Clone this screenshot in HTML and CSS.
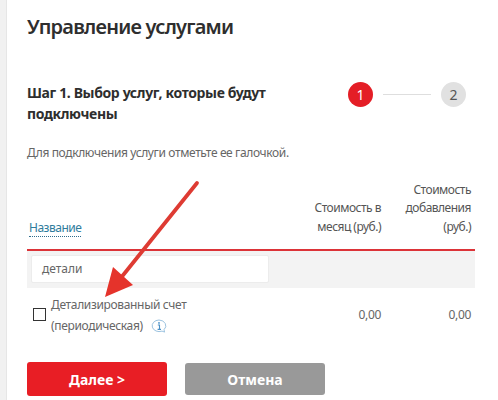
FILE: index.html
```
<!DOCTYPE html>
<html lang="ru">
<head>
<meta charset="utf-8">
<title>Управление услугами</title>
<link rel="stylesheet" href="styles.css">
</head>
<body>
<main class="panel">
  <h1 class="title">Управление услугами</h1>
  <section class="step-head">
    <h2 class="step-title">Шаг 1. Выбор услуг, которые будут подключены</h2>
    <div class="stepper">
      <span class="dot dot-active">1</span>
      <span class="connector"></span>
      <span class="dot">2</span>
    </div>
  </section>
  <p class="hint">Для подключения услуги отметьте ее галочкой.</p>
  <div class="table">
    <div class="thead">
      <a class="name-head">Название</a>
      <div class="col-a">Стоимость в месяц (руб.)</div>
      <div class="col-b">Стоимость добавления (руб.)</div>
    </div>
    <div class="filter"><div class="filter-input">детали</div></div>
    <div class="row">
      <span class="check"></span>
      <div class="service">Детализированный счет<br>(периодическая)
        <svg class="info" viewBox="0 0 16 14" width="16" height="14"><path d="M8 1a7 5.8 0 1 0 3 11.1l2.6 1-.6-2.4A7 5.8 0 0 0 8 1z" fill="none" stroke="#9cc3e0" stroke-width="1"/><circle cx="8" cy="3.9" r=".9" fill="#4a90c6"/><path d="M6.8 6h1.7v4.2M6.6 10.4h3.4" fill="none" stroke="#4a90c6" stroke-width="1.1"/></svg>
      </div>
      <div class="val-a">0,00</div>
      <div class="val-b">0,00</div>
    </div>
  </div>
  <div class="actions">
    <button class="btn btn-next">Далее &gt;</button>
    <button class="btn btn-cancel">Отмена</button>
  </div>
</main>
<svg class="arrow" viewBox="0 0 498 400" width="498" height="400"><line x1="197" y1="183" x2="120" y2="279" stroke="#de3b33" stroke-width="3.8" stroke-linecap="round"/><polygon points="113,267 133,285 105,297" fill="#e5332b"/></svg>
</body>
</html>
```
FILE: styles.css
```
* { box-sizing: border-box; }
html, body { margin: 0; height: 400px; overflow: hidden; }
body { background: #fff; font-family: "Noto Sans", "Open Sans", "Liberation Sans", sans-serif; font-stretch: 93%; color: #555; position: relative; }
.panel { height: 400px; padding: 0 23px 0 20px; margin-left: 7px; box-shadow: -1px 0 0 #e6e6e6; position: relative; }
body::before { content: ""; position: absolute; left: 0; top: 0; bottom: 0; width: 7px; background: #f1f1f1; }
.title { margin: 0; padding-top: 13px; font-size: 20px; line-height: 28px; font-weight: 600; letter-spacing: -0.77px; color: #2e2e2e; }
.step-head { display: flex; justify-content: space-between; margin-top: 41px; }
.step-title { margin: 0; width: 260px; font-size: 14px; line-height: 21px; font-weight: 700; letter-spacing: -0.36px; color: #2e2e2e; }
.stepper { display: flex; align-items: center; height: 26px; margin-right: 9px; margin-top: -1px; }
.dot { width: 25px; height: 25px; border-radius: 50%; background: #e1e1e1; color: #555; font-size: 14px; display: flex; align-items: center; justify-content: center; }
.dot-active { background: #e41e26; color: #fff; }
.connector { width: 48px; height: 1px; background: #dedede; margin: 0 10px; }
.hint { margin: 20px 0 0; font-size: 12px; line-height: 18px; letter-spacing: -0.37px; color: #666; }
.table { margin-top: 13px; }
.thead { display: flex; align-items: flex-end; height: 76px; border-bottom: 2px solid #dc3338; padding: 0 4px 13px 2px; font-size: 12px; line-height: 18.5px; letter-spacing: -0.5px; color: #555; }
.name-head { color: #2f7c9c; border-bottom: 1px dotted #2f6c8c; line-height: 17px; margin-bottom: -1px; margin-right: auto; }
.col-a { width: 80px; margin-left: auto; text-align: right; }
.col-b { width: 90px; text-align: right; }
.filter { background: #f3f3f3; height: 37px; padding: 4px; }
.filter-input { width: 238px; height: 28px; background: #fff; border: 1px solid #ececec; border-radius: 2px; padding: 0 10px; font-size: 12px; line-height: 26px; letter-spacing: 0; color: #666; }
.row { display: flex; align-items: center; height: 53px; padding: 0 4px 0 6px; font-size: 12px; letter-spacing: -0.34px; color: #666; }
.check { width: 13px; height: 13px; border: 1px solid #333; background: #fff; margin-right: 5px; flex: none; }
.service { line-height: 21px; flex: 1; }
.info { vertical-align: -3px; margin-left: 5px; }
.val-a { width: 60px; text-align: right; }
.val-b { width: 90px; text-align: right; }
.actions { display: flex; align-items: center; gap: 18px; margin-top: 21px; }
.btn { width: 140px; border: 0; border-radius: 3px; color: #fff; font-family: inherit; font-size: 14px; font-weight: 700; padding: 0; }
.btn-next { height: 34px; background: #e81e25; }
.btn-cancel { height: 32px; background: #999; }
.arrow { position: absolute; left: 0; top: 0; pointer-events: none; }
```
